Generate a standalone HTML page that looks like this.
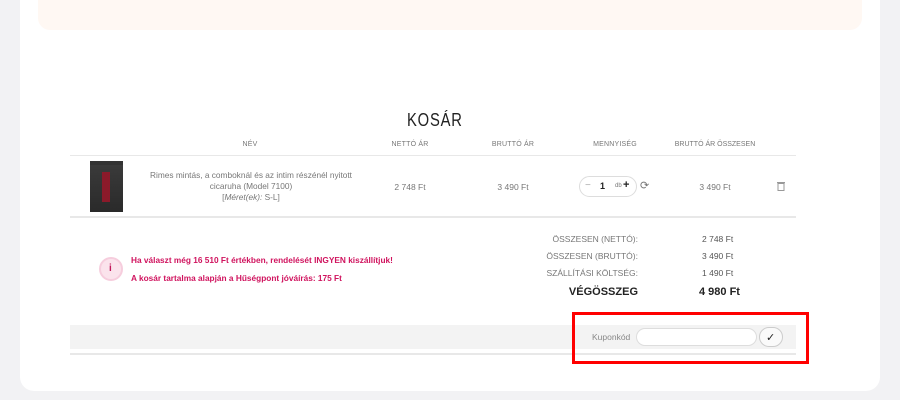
<!DOCTYPE html>
<html><head><meta charset="utf-8"><style>
*{margin:0;padding:0;box-sizing:border-box}
body{width:900px;height:400px;background:#f2f2f4;font-family:"Liberation Sans",sans-serif;position:relative;overflow:hidden;color:#666}
.card{position:absolute;left:20px;top:-20px;width:860px;height:411px;background:#fff;border-radius:14px}
.peach{position:absolute;left:38px;top:-20px;width:824px;height:50px;background:#fff8f3;border-radius:12px}
.a{position:absolute;white-space:nowrap}
.h{font-size:7px;color:#777;letter-spacing:.2px;text-align:center}
.s{font-size:8.5px;color:#777}
.line{position:absolute;height:2px;background:#e8e8e8}
</style></head><body>
<div class="card"></div>
<div class="peach"></div>
<div class="a" style="left:407px;top:110px;font-size:18px;color:#222;letter-spacing:1px;transform:scaleX(.82);transform-origin:left">KOSÁR</div>
<div class="a h" style="left:230px;top:141px;width:40px">NÉV</div>
<div class="a h" style="left:380px;top:141px;width:60px">NETTÓ ÁR</div>
<div class="a h" style="left:483px;top:141px;width:60px">BRUTTÓ ÁR</div>
<div class="a h" style="left:580px;top:141px;width:70px">MENNYISÉG</div>
<div class="a h" style="left:670px;top:141px;width:90px;letter-spacing:0">BRUTTÓ ÁR ÖSSZESEN</div>
<div class="line" style="left:70px;top:155px;width:726px;height:1px"></div>
<div class="a" style="left:90px;top:161px;width:33px;height:51px;background:linear-gradient(#333 0 8%,#3a3a3a 8%,#2a2a2a);"></div>
<div class="a" style="left:102px;top:172px;width:8px;height:30px;background:#8b1a2a"></div>
<div class="a s" style="left:140px;top:170px;width:222px;text-align:center;white-space:normal;line-height:11px;font-size:8.3px">Rimes mintás, a comboknál és az intim részénél nyitott cicaruha (Model 7100)<br>[<i>Méret(ek):</i> S-L]</div>
<div class="a s" style="left:380px;top:182px;width:60px;text-align:center">2 748 Ft</div>
<div class="a s" style="left:483px;top:182px;width:60px;text-align:center">3 490 Ft</div>
<div class="a" style="left:579px;top:176px;width:58px;height:21px;border:1px solid #ddd;border-radius:11px"></div>
<div class="a" style="left:585px;top:180px;font-size:10px;color:#aaa">−</div>
<div class="a" style="left:600px;top:181px;font-size:9px;color:#222;font-weight:bold">1</div>
<div class="a" style="left:615px;top:183px;font-size:6px;color:#777">db</div>
<div class="a" style="left:623px;top:179px;font-size:11px;color:#222;font-weight:bold">+</div>
<div class="a" style="left:640px;top:179px;font-size:11px;color:#777">⟳</div>
<div class="a s" style="left:670px;top:182px;width:90px;text-align:center">3 490 Ft</div>
<svg class="a" style="left:777px;top:181px" width="8" height="10" viewBox="0 0 8 10"><rect x="0" y="1" width="8" height="1.2" fill="#999"/><rect x="1" y="2.5" width="6" height="7" fill="none" stroke="#999"/></svg>
<div class="line" style="left:70px;top:216px;width:726px"></div>
<div class="a" style="left:99px;top:257px;width:24px;height:24px;border-radius:50%;background:#fbe3ec;border:2px solid #f6cddd"></div>
<div class="a" style="left:109px;top:263px;font-size:10px;font-weight:bold;color:#c2185b">i</div>
<div class="a" style="left:131px;top:255px;font-size:8.3px;font-weight:bold;color:#d0135e">Ha választ még 16 510 Ft értékben, rendelését INGYEN kiszállítjuk!</div>
<div class="a" style="left:131px;top:273px;font-size:8.3px;font-weight:bold;color:#d0135e">A kosár tartalma alapján a Hűségpont jóváírás: 175 Ft</div>
<div class="a s" style="left:520px;top:234px;width:118px;text-align:right">ÖSSZESEN (NETTÓ):</div>
<div class="a s" style="left:520px;top:251px;width:118px;text-align:right">ÖSSZESEN (BRUTTÓ):</div>
<div class="a s" style="left:520px;top:268px;width:118px;text-align:right">SZÁLLÍTÁSI KÖLTSÉG:</div>
<div class="a" style="left:520px;top:286px;width:118px;text-align:right;font-size:11px;font-weight:bold;color:#222">VÉGÖSSZEG</div>
<div class="a s" style="left:702px;top:234px;color:#555">2 748 Ft</div>
<div class="a s" style="left:702px;top:251px;color:#555">3 490 Ft</div>
<div class="a s" style="left:702px;top:268px;color:#555">1 490 Ft</div>
<div class="a" style="left:699px;top:286px;font-size:11px;font-weight:bold;color:#222">4 980 Ft</div>
<div class="a" style="left:70px;top:325px;width:726px;height:24px;background:#f3f3f3"></div>
<div class="line" style="left:70px;top:353px;width:726px"></div>
<div class="a s" style="left:592px;top:332px;color:#888">Kuponkód</div>
<div class="a" style="left:636px;top:328px;width:121px;height:18px;background:#fff;border:1px solid #ddd;border-radius:9px"></div>
<div class="a" style="left:759px;top:327px;width:24px;height:20px;background:#fafafa;border:1px solid #ccc;border-radius:10px"></div>
<div class="a" style="left:766px;top:331px;font-size:11px;color:#222">✓</div>
<div class="a" style="left:572px;top:312px;width:237px;height:52px;border:3px solid #f00"></div>
</body></html>
